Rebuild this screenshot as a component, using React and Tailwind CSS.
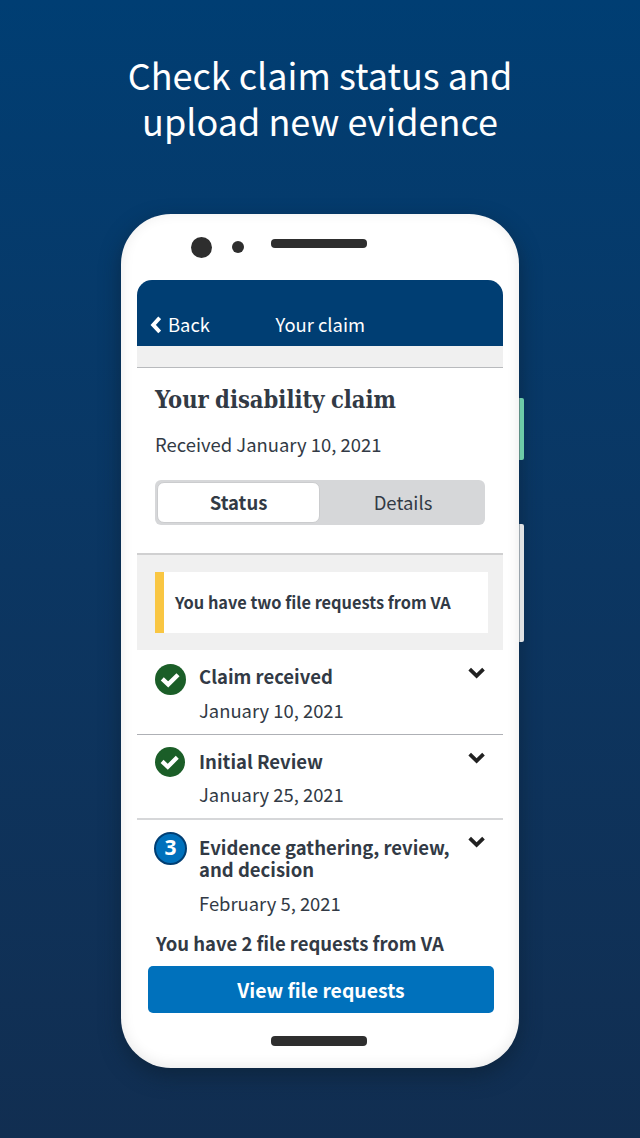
import React from "react";

function ChevronDown({ className }) {
  return (
    <svg viewBox="0 0 17 12" className={"h-3 w-[17px] shrink-0 " + className} fill="none" stroke="#212121" strokeWidth="3.7">
      <path d="M1.7 2.1 8.6 8.9 15.5 2.1" />
    </svg>
  );
}

function ChevronLeft({ className }) {
  return (
    <svg viewBox="0 0 12 18" className={"h-[18px] w-3 shrink-0 " + className} fill="none" stroke="currentColor" strokeWidth="3.9">
      <path d="M10.7 1.8 4.2 8.9 10.7 16" />
    </svg>
  );
}

function DoneBadge({ className }) {
  return (
    <span className={"flex shrink-0 items-center justify-center rounded-full bg-[#1b5e28] " + className}>
      <svg viewBox="0 0 31 31" className="h-full w-full" fill="none" stroke="white" strokeWidth="4.4">
        <path d="M7.3 14.9 13.2 20.4 23 10.7" strokeLinejoin="miter" />
      </svg>
    </span>
  );
}

function Step({ className, badge, title, date, titleClass, dateClass, chevronClass }) {
  return (
    <li className={"flex items-start pr-[18px] " + className}>
      <div className="flex w-11 shrink-0">{badge}</div>
      <div className="grow whitespace-nowrap">
        <h2 className={"text-[18.5px] font-bold " + titleClass}>{title}</h2>
        <p className={"text-[18.4px] leading-6 " + dateClass}>{date}</p>
      </div>
      <ChevronDown className={chevronClass} />
    </li>
  );
}

export default function App() {
  return (
    <main className="flex h-[1138px] w-[640px] flex-col items-center overflow-hidden bg-linear-to-b from-[#003e73] to-[#112e51] font-['Noto_Sans_CJK_SC','Noto_Sans',sans-serif] text-[#323a45]">
      <h1 className="mt-[51px] h-[163px] text-center text-[36px] leading-[46px] text-white">
        Check claim status and
        <br />
        upload new evidence
      </h1>

      <div className="relative h-[854px] w-[398px] shrink-0">
        <div className="flex h-full flex-col rounded-[50px] bg-white px-4 shadow-[0_8px_20px_rgba(12,32,50,0.6),inset_0_-2px_14px_rgba(0,0,0,0.09)]">
          <div className="flex h-[66px] shrink-0 items-start pl-[54px]">
            <span className="mt-[23px] h-[21px] w-[21px] rounded-full bg-[#2e2e2e]" />
            <span className="mt-[27px] ml-5 h-3 w-3 rounded-full bg-[#2e2e2e]" />
            <span className="mt-[25px] ml-[27px] h-[9px] w-24 rounded-[4px] bg-[#2e2e2e]" />
          </div>

          <header className="flex h-[66px] shrink-0 items-start rounded-t-[15px] bg-[#003e73] pt-8 pl-3 text-[18.4px] leading-6 text-white">
            <ChevronLeft className="mt-[4px]" />
            <span className="ml-[7px] w-[107.5px]">Back</span>
            <span>Your claim</span>
          </header>
          <div className="h-[22px] shrink-0 border-b border-[#b8babd] bg-[#f0f0f0]" />

          <section className="flex h-[187px] shrink-0 flex-col border-b-2 border-[#d0d0d1] px-[18px] pt-[17px]">
            <h2 className="h-[30px] origin-left scale-x-[0.98] font-['DejaVu_Serif_Condensed','DejaVu_Serif',serif] text-[24px] leading-[30px] font-bold [word-spacing:-1px] whitespace-nowrap">
              Your disability claim
            </h2>
            <p className="mt-[17px] text-[18.45px] leading-6">Received January 10, 2021</p>
            <div className="mt-6 flex h-[45px] rounded-[6px] bg-[#d6d7d9] p-[2px] text-[18.5px] leading-[40px]">
              <div className="w-[163px] rounded-[7px] border border-[#cbccce] bg-white text-center leading-[39px] font-bold">Status</div>
              <div className="w-[163px] pl-[3px] text-center">Details</div>
            </div>
          </section>

          <section className="h-[95px] shrink-0 bg-[#f0f0f0] pt-[17px] pr-[15px] pl-[18px]">
            <div className="h-[61px] border-l-9 border-[#f9c642] bg-white pl-[11px] text-[16.35px] leading-[61px] font-bold whitespace-nowrap">
              You have two file requests from VA
            </div>
          </section>

          <ul className="shrink-0">
            <Step
              className="h-[85px] border-b border-[#aeb0b5] pl-[18px]"
              badge={<DoneBadge className="mt-[14px] h-[31px] w-[31px]" />}
              title="Claim received"
              date="January 10, 2021"
              titleClass="mt-[14px] leading-6"
              dateClass="mt-[10px]"
              chevronClass="mt-[17px]"
            />
            <Step
              className="h-[85px] border-b-2 border-[#d6d7d9] pl-[18px]"
              badge={<DoneBadge className="mt-[12px] h-[30px] w-[30px]" />}
              title="Initial Review"
              date="January 25, 2021"
              titleClass="mt-[14px] leading-6"
              dateClass="mt-[9px]"
              chevronClass="mt-[16.5px]"
            />
            <Step
              className="h-[111px] pl-[18px]"
              badge={
                <span className="mt-[12px] -ml-px flex h-[33px] w-[33px] items-center justify-center rounded-full border-2 border-[#003e73] bg-[#0071bc] pb-[3px] font-['Noto_Sans',sans-serif] text-[21px] leading-none font-bold text-white">
                  3
                </span>
              }
              title={
                <>
                  Evidence gathering, review,
                  <br />
                  and decision
                </>
              }
              date="February 5, 2021"
              titleClass="mt-[16px] leading-[22px]"
              dateClass="mt-[11px]"
              chevronClass="mt-[16px]"
            />
          </ul>

          <p className="ml-[19px] text-[18.5px] leading-6 font-bold">You have 2 file requests from VA</p>
          <button className="mt-[11px] ml-[11px] h-[47px] w-[346px] shrink-0 rounded-[5px] bg-[#0071bc] text-[19.4px] leading-[47px] font-bold text-white">
            View file requests
          </button>
          <span className="mt-[23px] ml-[134px] h-[10px] w-24 rounded-[4px] bg-[#2e2e2e]" />
        </div>

        <div className="absolute top-[184px] -right-[5px] h-[62px] w-[5px] rounded-r-[2px] border-l border-[#5f8f86] bg-[#6dcba8]" />
        <div className="absolute top-[310px] -right-[5px] h-[118px] w-[5px] rounded-r-[2px] border-l border-[#9ba5ad] bg-[#e0e2e4]" />
      </div>
    </main>
  );
}
